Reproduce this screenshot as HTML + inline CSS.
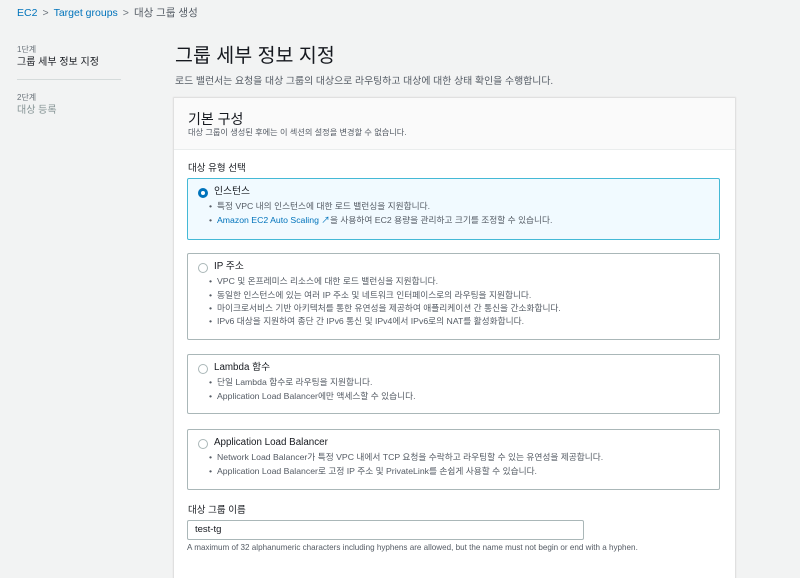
<!DOCTYPE html>
<html><head><meta charset="utf-8"><style>
*{margin:0;padding:0;box-sizing:border-box}
body{width:800px;height:565px;overflow:hidden;background:#f2f3f3;font-family:"Liberation Sans","Noto Sans CJK KR",sans-serif;color:#16191f;position:relative;line-height:1.3}
.a{position:absolute;white-space:nowrap}
.bc{top:7px;left:17px;font-size:10.5px;color:#545b64}
.bc a{color:#0073bb;text-decoration:none}
.bc .s{color:#687078;margin:0 5px}
.panel{position:absolute;left:174px;top:98px;width:561px;height:480px;background:#fff;box-shadow:0 0 1px 1px #dcdcdc}
.hd{height:52px;background:#fafafa;border-bottom:1px solid #eaeded}
.card{position:absolute;left:13px;width:533px;border:1px solid #aab7b8;border-radius:2px;background:#fff}
.card.sel{border-color:#44b9d6;background:#f1faff}
.rad{position:absolute;left:10px;top:9px;width:10px;height:10px;border-radius:50%;border:1px solid #aab7b8;background:#fff}
.sel .rad{border:3px solid #0073bb}
.ct{position:absolute;left:26px;top:6px;font-size:9.8px;line-height:14px;color:#16191f}
.li{position:absolute;left:29px;font-size:8.7px;line-height:12px;color:#545b64}
.li:before{content:"•";position:absolute;left:-8px}
</style></head><body>
<div class="a bc"><a>EC2</a><span class="s">&gt;</span><a>Target groups</a><span class="s">&gt;</span>대상 그룹 생성</div>
<div class="a" style="left:17px;top:45px;font-size:8px;color:#687078">1단계</div>
<div class="a" style="left:17px;top:56px;font-size:10px;color:#16191f">그룹 세부 정보 지정</div>
<div style="position:absolute;left:17px;top:79px;width:104px;height:1px;background:#d5dbdb"></div>
<div class="a" style="left:17px;top:93px;font-size:8px;color:#687078">2단계</div>
<div class="a" style="left:17px;top:104px;font-size:10px;color:#879596">대상 등록</div>
<div class="a" style="left:175px;top:44px;font-size:19.5px;color:#16191f">그룹 세부 정보 지정</div>
<div class="a" style="left:175px;top:76px;font-size:9.9px;color:#545b64">로드 밸런서는 요청을 대상 그룹의 대상으로 라우팅하고 대상에 대한 상태 확인을 수행합니다.</div>
<div class="panel">
<div class="hd"></div>
<div class="a" style="left:14px;top:12px;font-size:14px">기본 구성</div>
<div class="a" style="left:14px;top:30px;font-size:8.2px;color:#545b64">대상 그룹이 생성된 후에는 이 섹션의 설정을 변경할 수 없습니다.</div>
<div class="a" style="left:14px;top:65px;font-size:9.5px">대상 유형 선택</div>
<div class="card sel" style="top:80px;height:62px"><div class="rad"></div><div class="ct">인스턴스</div>
<div class="li" style="top:21px">특정 VPC 내의 인스턴스에 대한 로드 밸런싱을 지원합니다.</div>
<div class="li" style="top:35px"><span style="color:#0073bb">Amazon EC2 Auto Scaling ↗</span>을 사용하여 EC2 용량을 관리하고 크기를 조정할 수 있습니다.</div></div>
<div class="card" style="top:155px;height:87px"><div class="rad"></div><div class="ct">IP 주소</div>
<div class="li" style="top:21px">VPC 및 온프레미스 리소스에 대한 로드 밸런싱을 지원합니다.</div>
<div class="li" style="top:35px">동일한 인스턴스에 있는 여러 IP 주소 및 네트워크 인터페이스로의 라우팅을 지원합니다.</div>
<div class="li" style="top:48px">마이크로서비스 기반 아키텍처를 통한 유연성을 제공하여 애플리케이션 간 통신을 간소화합니다.</div>
<div class="li" style="top:61px">IPv6 대상을 지원하여 종단 간 IPv6 통신 및 IPv4에서 IPv6로의 NAT를 활성화합니다.</div></div>
<div class="card" style="top:256px;height:60px"><div class="rad"></div><div class="ct">Lambda 함수</div>
<div class="li" style="top:21px">단일 Lambda 함수로 라우팅을 지원합니다.</div>
<div class="li" style="top:35px">Application Load Balancer에만 액세스할 수 있습니다.</div></div>
<div class="card" style="top:331px;height:61px"><div class="rad"></div><div class="ct">Application Load Balancer</div>
<div class="li" style="top:21px">Network Load Balancer가 특정 VPC 내에서 TCP 요청을 수락하고 라우팅할 수 있는 유연성을 제공합니다.</div>
<div class="li" style="top:35px">Application Load Balancer로 고정 IP 주소 및 PrivateLink를 손쉽게 사용할 수 있습니다.</div></div>
<div class="a" style="left:14px;top:407px;font-size:9.5px">대상 그룹 이름</div>
<div style="position:absolute;left:13px;top:422px;width:397px;height:20px;border:1px solid #aab7b8;border-radius:2px;font-size:9.5px;line-height:12px;padding:3px 7px">test-tg</div>
<div class="a" style="left:13px;top:445px;font-size:8.1px;color:#545b64">A maximum of 32 alphanumeric characters including hyphens are allowed, but the name must not begin or end with a hyphen.</div>
</div>
</body></html>
